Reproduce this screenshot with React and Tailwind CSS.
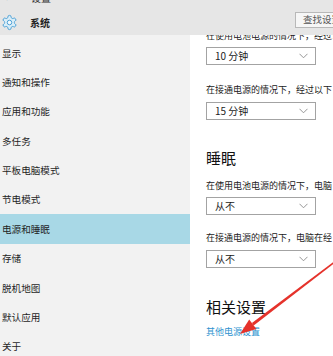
import React from 'react';

const FONT = "font-['Noto_Sans_CJK_SC','Noto_Sans',sans-serif]";

const navItems = [
  '显示',
  '通知和操作',
  '应用和功能',
  '多任务',
  '平板电脑模式',
  '节电模式',
  '电源和睡眠',
  '存储',
  '脱机地图',
  '默认应用',
  '关于',
];

// gear in the header, pale windows-blue
const Gear = () => (
  <svg width="17" height="17" viewBox="0 0 24 24" fill="#d8edf8" stroke="#4a9fd4" strokeWidth="1.4" strokeLinejoin="round">
    <path d="M12.22 2h-.44a2 2 0 0 0-2 2v.18a2 2 0 0 1-1 1.73l-.43.25a2 2 0 0 1-2 0l-.15-.08a2 2 0 0 0-2.730.73l-.22.38a2 2 0 0 0 .73 2.73l.15.1a2 2 0 0 1 1 1.72v.51a2 2 0 0 1-1 1.74l-.15.09a2 2 0 0 0-.73 2.73l.22.38a2 2 0 0 0 2.73.73l.15-.08a2 2 0 0 1 2 0l.43.25a2 2 0 0 1 1 1.73V20a2 2 0 0 0 2 2h.44a2 2 0 0 0 2-2v-.18a2 2 0 0 1 1-1.73l.43-.25a2 2 0 0 1 2 0l.15.08a2 2 0 0 0 2.73-.73l.22-.39a2 2 0 0 0-.73-2.73l-.15-.08a2 2 0 0 1-1-1.740v-.5a2 2 0 0 1 1-1.74l.15-.09a2 2 0 0 0 .73-2.73l-.22-.38a2 2 0 0 0-2.73-.73l-.15.08a2 2 0 0 1-2 0l-.43-.25a2 2 0 0 1-1-1.73V4a2 2 0 0 0-2-2z" />
    <circle cx="12" cy="12" r="3.2" fill="#f4f9fc" />
  </svg>
);

const Chevron = () => (
  <svg width="9" height="6" viewBox="0 0 9 6" fill="none" stroke="#8a8a8a" strokeWidth="0.9">
    <path d="M0.5 0.8 L4.5 4.8 L8.5 0.8" />
  </svg>
);

const Dropdown = ({ value, className }) => (
  <div className={`w-[110px] h-[18px] border border-[#a3a3a3] bg-white flex items-center justify-between pl-[8px] pr-[7px] ${className}`}>
    <span className="text-[10px] leading-none text-[#222]">{value}</span>
    <Chevron />
  </div>
);

export default function App() {
  return (
    <div className={`relative w-[333px] h-[356px] overflow-hidden bg-white ${FONT}`}>
      {/* header */}
      <div className="h-[35px] bg-[#e6e6e6] overflow-hidden flex flex-col">
        <div className="h-[12px] -mt-[8px] flex items-center text-[10px] leading-none text-[#333]">
          <span className="w-[31px] pl-[4px]">←</span>
          <span>设置</span>
        </div>
        <div className="flex items-center mt-[10px]">
          <div className="flex-1 flex items-center">
            <div className="w-[30px] pl-[1px] flex items-center">
              <Gear />
            </div>
            <span className="text-[10px] font-bold text-[#222] leading-none">系统</span>
          </div>
          <div className="w-[60px] -mr-[22px] shrink-0 h-[16px] self-start -mt-[2px] border border-[#b8b8b8] bg-[#f6f6f6] flex items-center pl-[7px]">
            <span className="text-[9.5px] leading-none text-[#555]">查找设置</span>
          </div>
        </div>
      </div>

      <div className="flex h-[321px]">
        {/* sidebar */}
        <div className="w-[190px] shrink-0 bg-[#f2f2f2] pt-[3px]">
          {navItems.map((item) => (
            <div
              key={item}
              className={`h-[29.4px] flex items-center pl-[2px] text-[9.6px] text-[#1f1f1f] ${
                item === '电源和睡眠' ? 'bg-[#a8d8e6]' : ''
              }`}
            >
              {item}
            </div>
          ))}
        </div>

        {/* content */}
        <div className="flex-1 overflow-hidden pl-[16px] flex flex-col whitespace-nowrap">
          <div className="h-[12px] -mt-[5px] text-[9px] leading-[12px] text-[#222]">在使用电池电源的情况下，经过以下</div>
          <Dropdown value="10 分钟" className="mt-[5px]" />
          <div className="h-[12px] mt-[19px] text-[9px] leading-[12px] text-[#222]">在接通电源的情况下，经过以下</div>
          <Dropdown value="15 分钟" className="mt-[6px]" />

          <div className="h-[20px] mt-[28px] text-[15px] leading-[20px] text-[#111]">睡眠</div>
          <div className="h-[12px] mt-[12px] text-[9px] leading-[12px] text-[#222]">在使用电池电源的情况下，电脑</div>
          <Dropdown value="从不" className="mt-[5px]" />
          <div className="h-[12px] mt-[17px] text-[9px] leading-[12px] text-[#222]">在接通电源的情况下，电脑在经</div>
          <Dropdown value="从不" className="mt-[6px]" />

          <div className="h-[20px] mt-[29px] text-[15px] leading-[20px] text-[#111]">相关设置</div>
          <div className="h-[12px] mt-[9px] text-[9px] leading-[12px] text-[#2e93cf]">其他电源设置</div>
        </div>
      </div>

      {/* red annotation arrow drawn over the page */}
      <svg className="absolute left-0 top-0 pointer-events-none" width="333" height="356" viewBox="0 0 333 356">
        <polygon points="253.7,325.5 336.5,261.6 335.5,260.4 251.9,323.1" fill="#e5322b" />
        <polygon points="240,334 256.4,329.1 249.2,319.5" fill="#e5322b" />
      </svg>
    </div>
  );
}
